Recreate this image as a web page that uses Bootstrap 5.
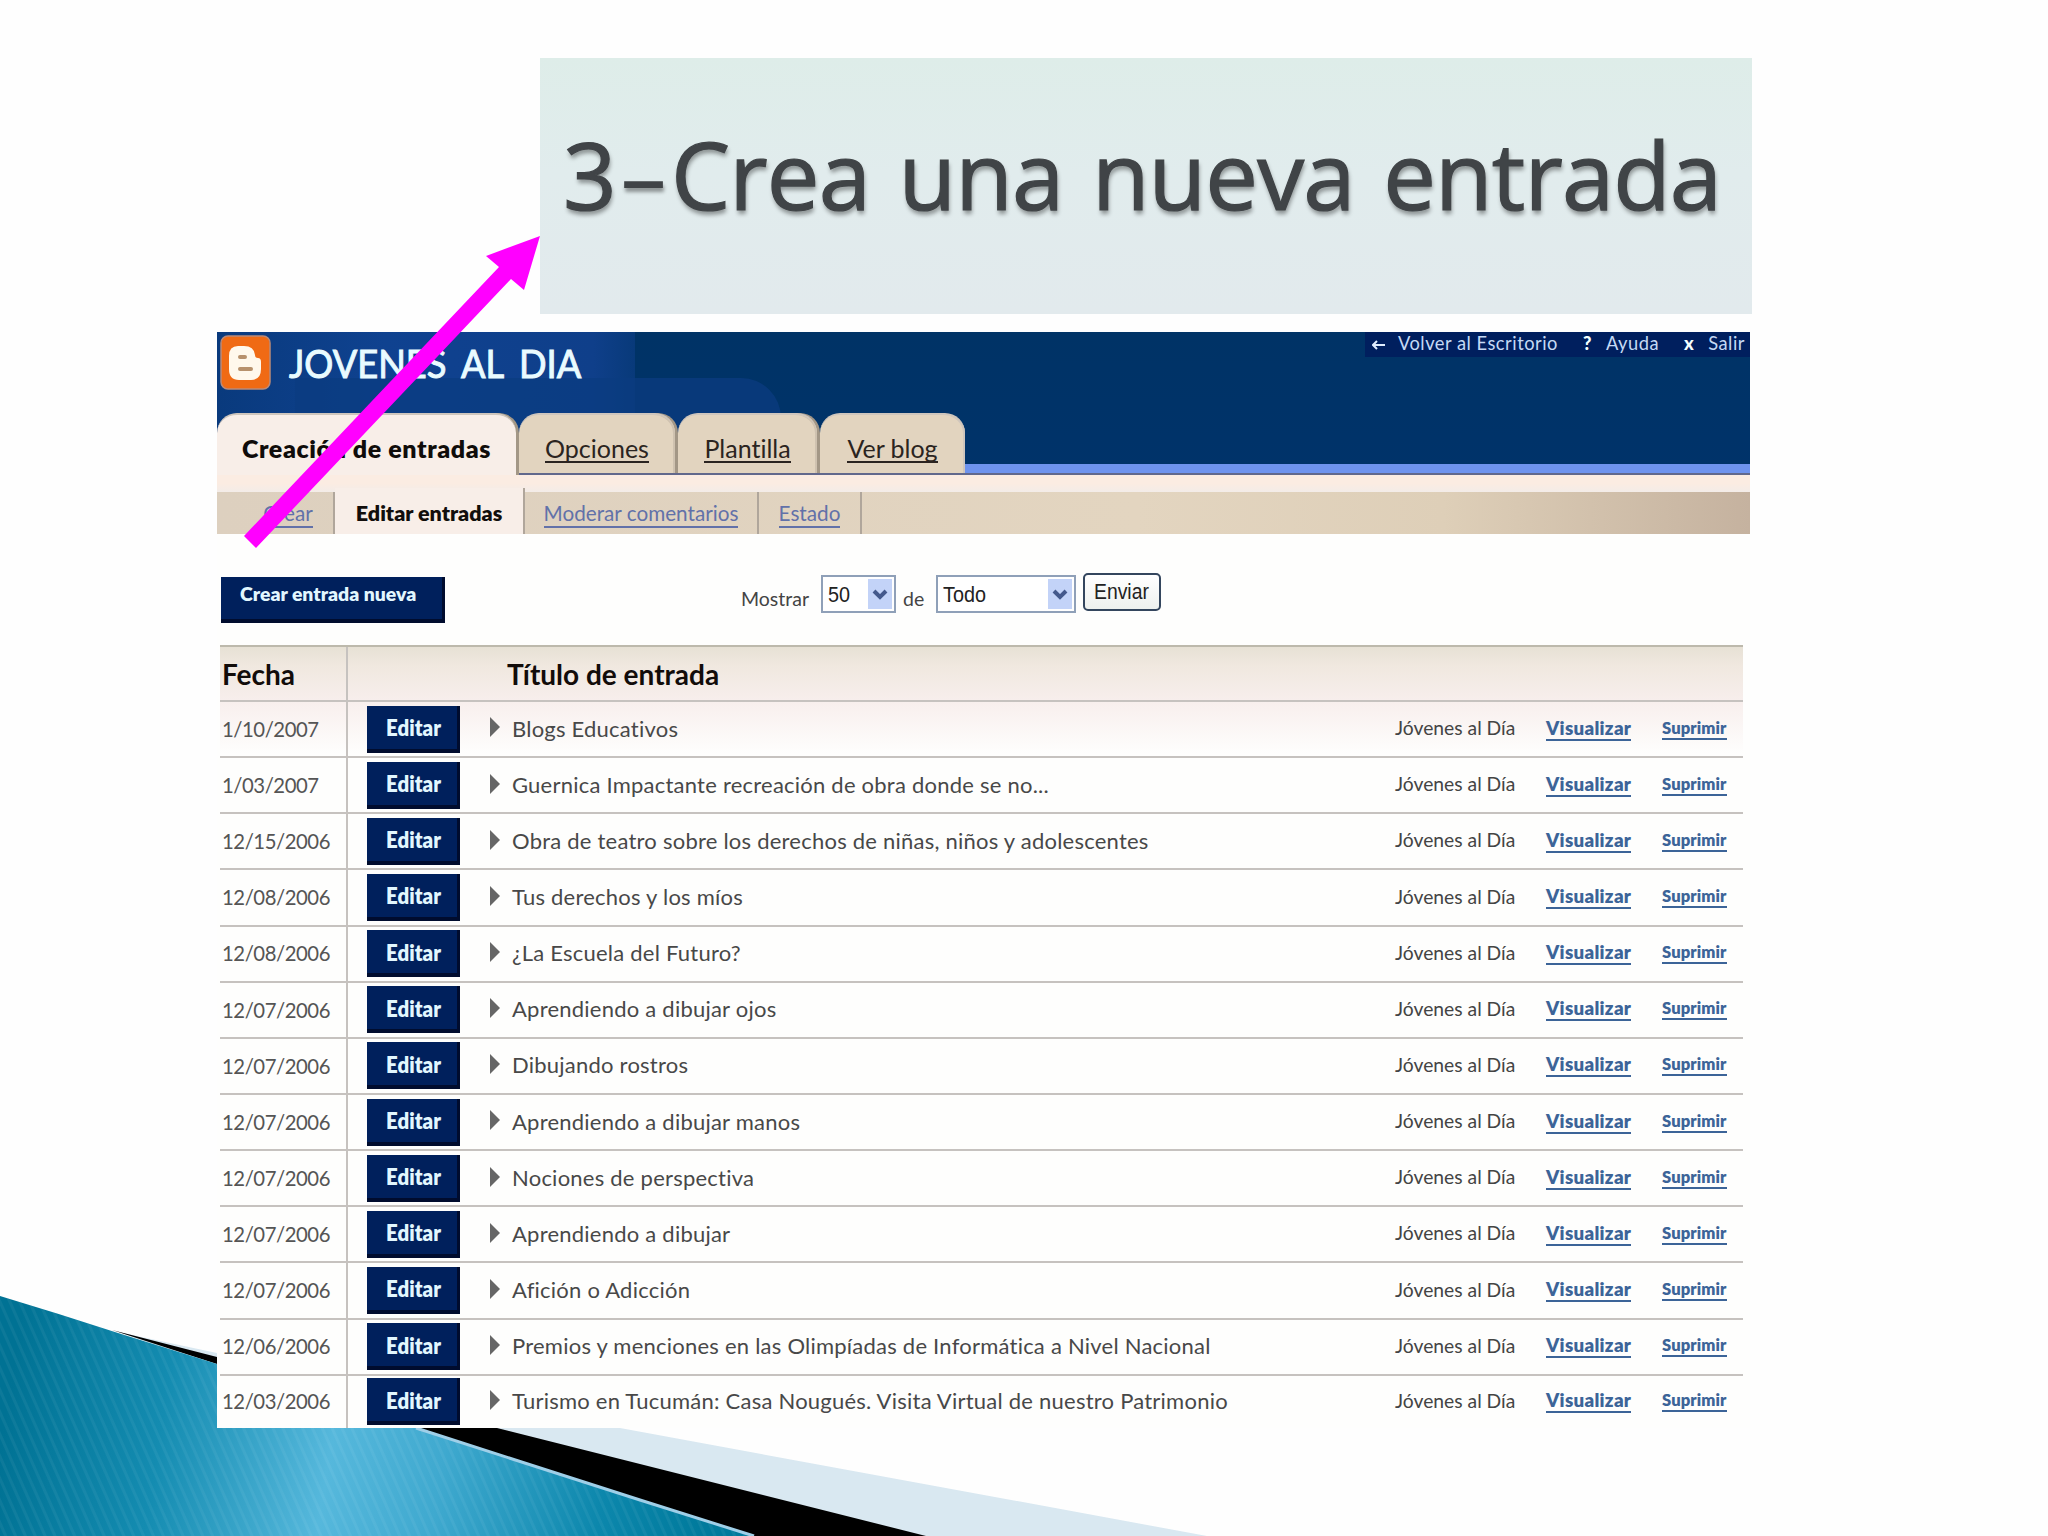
<!DOCTYPE html>
<html lang="es">
<head>
    <meta charset="UTF-8">
    <meta name="viewport" content="width=device-width, initial-scale=1.0">
    <title>Crea una nueva entrada</title>
    <link href="https://cdn.jsdelivr.net/npm/bootstrap@5.3.0/dist/css/bootstrap.min.css" rel="stylesheet">
    <style>
        body {
            background-color: #fefefe;
            font-family: Lato, "Open Sans", sans-serif;
            font-variant-ligatures: none;
            color: #444;
        }
        .slide {
            width: 2048px;
            height: 1536px;
            padding-top: 58px;
        }
        .waves, .pointer {
            left: 0;
            top: 0;
            pointer-events: none;
        }
        .slide-title {
            width: 1212px;
            height: 256px;
            margin: 0 0 18px 540px;
            padding: 0 0 25px 23px;
            background: linear-gradient(#deede9, #e1eced 45%, #e2eaed);
            color: #404447;
            font: 500 94px/1 "Open Sans", sans-serif;
            letter-spacing: -.9px;
            word-spacing: 5px;
            text-shadow: 1px 4px 4px rgba(0, 0, 0, .38);
            -webkit-text-stroke: 1.2px #404447;
            white-space: nowrap;
        }
        .slide-title .dash { display: inline-block; margin: 0 5px 0 4px; transform: scaleX(.98); -webkit-text-stroke: 0; }
        .blog {
            width: 1533px;
            height: 1096px;
            margin-left: 217px;
            background: #fefefd;
        }
        .blog-head {
            height: 143px;
            background: linear-gradient(#036, #00336a);
            border-bottom: 2px solid #61688c;
            box-shadow: inset 0 -9px #6e93ee;
        }
        .glow-a { left: 0; top: 0; width: 418px; height: 134px; background: linear-gradient(90deg, #093a7d, #0f4290 40%, #0f3f8a 90%, #083a7a); }
        .glow-b { left: 78px; top: 46px; width: 486px; height: 88px; background: #0b3c80; border-radius: 0 40px 0 0; opacity: .75; }
        .logo { left: 3px; top: 3px; }
        .blog-name {
            left: 72px;
            top: 7px;
            font-size: 39px;
            line-height: 48px;
            word-spacing: 7px;
            color: #e9fbff;
            -webkit-text-stroke: 1px #e9fbff;
            transform: scaleX(.93);
            transform-origin: left;
            white-space: nowrap;
        }
        .top-links {
            right: 0;
            top: 0;
            width: 385px;
            height: 25px;
            background: #001f5e;
            color: #c5daf5;
            font-size: 18.3px;
            line-height: 22px;
            letter-spacing: .5px;
            white-space: nowrap;
        }
        .top-links b { margin-left: 25px; color: #f4ffff; font-weight: 900; }
        .top-links b + span { margin-left: 14px; }
        .top-links svg { margin: 7px 12px 0 7px; }
        .tabs { left: 0; bottom: -2px; height: 62px; gap: 3px; }
        .tabs a {
            display: block;
            height: 60px;
            border-radius: 20px 20px 0 0;
            background: #e2d4bf;
            border-top: 2px solid #cfc6bd;
            box-shadow: inset -2px 0 #cfc2b0, 3px 0 #a39786;
            color: #2b2420;
            font-size: 25px;
            line-height: 66px;
            text-align: center;
            text-decoration: none;
            white-space: nowrap;
        }
        .tabs a:last-child { box-shadow: inset -2px 0 #cfc6bd; }
        .tabs a span, .subnav a span, .row-link span { border-bottom: 2px solid currentColor; display: inline-block; }
        .tabs a span { line-height: 25px; }
        .tabs .on {
            height: 62px;
            background: #f8eee8;
            box-shadow: 3px 0 #a39786;
            color: #100c0a;
            font-weight: 800;
            letter-spacing: .6px;
        }
        .tab-posts { width: 299px; }
        .tab-options { width: 156px; }
        .tab-template { width: 139px; }
        .tab-view { width: 145px; }
        .strip { height: 17px; background: linear-gradient(#fbece2 50%, #f3ece8); }
        .subnav {
            height: 42px;
            background: linear-gradient(90deg, #ddd0bf, #e3d5c0 60%, #decfb8 80%, #c5b29f);
            font-size: 20.7px;
        }
        .subnav a {
            height: 42px;
            color: #6271a9;
            line-height: 43px;
            border-right: 2px solid #b0a69b;
            text-align: center;
            text-decoration: none;
            white-space: nowrap;
        }
        .subnav a span { line-height: 25px; }
        .subnav .on { background: #f8eee8; color: #120e0c; font-size: 21.5px; font-weight: 800; margin-top: -4px; padding-top: 4px; height: 46px; }
        .sub-new { width: 118px; padding-left: 26px; }
        .sub-edit { width: 190px; }
        .sub-comments { width: 234px; }
        .sub-status { width: 103px; }
        .tools { height: 111px; padding: 39px 0 0 4px; }
        .navy {
            border-radius: 0;
            border: 0;
            background: #00205c;
            box-shadow: inset -3px -4px #000c2e;
            color: #e2f7ff;
            font-weight: 800;
        }
        .new-post { width: 224px; height: 46px; margin-top: 4px; padding: 0 0 12px 19px; font-size: 19.4px; text-align: left; white-space: nowrap; }
        .lbl { font-size: 19.5px; line-height: 23px; padding-top: 14px; color: #444; }
        .lbl-show { margin-left: 296px; width: 80px; }
        .lbl-of { width: 40px; padding-left: 7px; }
        .pick {
            height: 38px;
            margin-top: 2px;
            padding-left: 5px;
            border: 2px solid #8fa0b8;
            background: #fff;
            color: #222;
            font: 22.5px/35px "Liberation Sans", sans-serif;
        }
        .pick-count { width: 75px; }
        .pick-kind { width: 140px; }
        .pick span, .send span { display: inline-block; transform: scaleX(.88); transform-origin: left; }
        .pick svg { margin: 2px 2px 0 0; }
        .send {
            width: 78px;
            height: 38px;
            margin-left: 7px;
            border: 2px solid #34465e;
            border-radius: 5px;
            background: linear-gradient(#fff, #eef1ee);
            color: #222;
            font: 22px/31px "Liberation Sans", sans-serif;
            padding: 0 0 2px 9px;
            text-align: left;
        }
        .posts { margin-left: 3px; width: 1523px; border-top: 2px solid #bdb9ac; }
        .post {
            display: grid;
            grid-template-columns: 128px 143px 904px 151px 116px 81px;
            height: 56.15px;
            border-bottom: 2px solid #c6c2bf;
            align-items: center;
            white-space: nowrap;
            font-size: 22px;
        }
        .post > :first-child { border-right: 2px solid #c6c2bf; height: 100%; display: flex; align-items: center; padding-left: 2px; }
        .post:nth-child(2) { background: linear-gradient(#f8efed, #fefefd 95%); }
        .post:last-child { height: 52px; border-bottom: 0; }
        .post-head { height: 55px; background: linear-gradient(#e7e1d5, #f0e8df 35%, #f7eeec); color: #120c0a; font-size: 28px; font-weight: 700; }
        .edit { width: 93px; height: 47px; margin-left: 19px; padding: 0 0 2px; font-size: 22px; line-height: 44px; }
        .edit span { display: inline-block; transform: scaleX(.93); }
        .day { font-size: 20.3px; letter-spacing: -.45px; color: #555; }
        .name { color: #484848; letter-spacing: .23px; padding-bottom: 2px; }
        .name svg { margin: -7px 12px 0 -1px; }
        .author { font-size: 19.3px; color: #444; padding-bottom: 1px; }
        .row-link { color: #3c6498; font-weight: 800; text-decoration: none; line-height: 21px; }
        .row-link.view { font-size: 18.7px; letter-spacing: .3px; }
        .row-link.del { font-size: 16.6px; line-height: 19px; letter-spacing: .1px; }
    </style>
</head>
<body>
    <main class="slide position-relative overflow-hidden">
        <svg class="waves position-absolute" width="2048" height="1536" viewBox="0 0 2048 1536">
            <defs>
                <linearGradient id="sea" gradientUnits="userSpaceOnUse" x1="0" y1="1450" x2="700" y2="1560">
                    <stop offset="0" stop-color="#007294"/>
                    <stop offset=".22" stop-color="#148cb1"/>
                    <stop offset=".46" stop-color="#56b8dc"/>
                    <stop offset=".62" stop-color="#3fa9cf"/>
                    <stop offset=".85" stop-color="#0c87ac"/>
                    <stop offset="1" stop-color="#007a9c"/>
                </linearGradient>
                <pattern id="lines" width="9" height="9" patternUnits="userSpaceOnUse" patternTransform="rotate(-24)">
                    <rect width="3" height="9" fill="#fff" opacity=".05"/>
                </pattern>
            </defs>
            <path d="M118 1332L217 1353L620 1428L1207 1536H700Z" fill="#d9e8f1"/>
            <path d="M112 1330L217 1357L497 1428L926 1536H740L217 1364Z" fill="#000"/>
            <path d="M0 1296Q60 1314 118 1333L217 1364L416 1428L640 1500L754 1536H0Z" fill="url(#sea)"/>
            <path d="M0 1296Q60 1314 118 1333L217 1364L416 1428L640 1500L754 1536H0Z" fill="url(#lines)"/>
            <path d="M416 1428L640 1500L754 1536" fill="none" stroke="#9fcfe8" stroke-width="3"/>
        </svg>

        <h1 class="slide-title position-relative d-flex align-items-center"><div>3<span class="dash">–</span>Crea una nueva entrada</div></h1>

        <section class="blog position-relative">
            <header class="blog-head position-relative">
                <div class="glow-a position-absolute"></div>
                <div class="glow-b position-absolute"></div>
                <svg class="logo position-absolute" width="51" height="55" viewBox="0 0 51 55">
                    <rect x="1" y="1" width="49" height="53" rx="7" fill="#f06a14" stroke="#bb8a78" stroke-width="1.5"/>
                    <path d="M18 11H24Q34 11 35 20Q35 23 38 23Q41 23 41 27V34Q41 45 31 45H19Q9 45 9 34V21Q9 11 18 11Z" fill="#fff8ec"/>
                    <path d="M20 22H25M20 34H31" stroke="#b7916c" stroke-width="4" stroke-linecap="round"/>
                </svg>
                <div class="blog-name position-absolute">JOVENES AL DIA</div>
                <nav class="top-links position-absolute d-flex">
                    <svg width="14" height="12" viewBox="0 0 14 12"><path d="M1 6H13M5 2L1 6L5 10" fill="none" stroke="#e0edff" stroke-width="2"/></svg>
                    <span>Volver al Escritorio</span>
                    <b>?</b><span>Ayuda</span>
                    <b>x</b><span>Salir</span>
                </nav>
                <nav class="tabs position-absolute d-flex">
                    <a class="tab-posts on" href="#">Creación de entradas</a>
                    <a class="tab-options" href="#"><span>Opciones</span></a>
                    <a class="tab-template" href="#"><span>Plantilla</span></a>
                    <a class="tab-view" href="#"><span>Ver blog</span></a>
                </nav>
            </header>
            <div class="strip"></div>
            <nav class="subnav d-flex">
                <a class="sub-new" href="#"><span>Crear</span></a>
                <a class="sub-edit on" href="#">Editar entradas</a>
                <a class="sub-comments" href="#"><span>Moderar comentarios</span></a>
                <a class="sub-status" href="#"><span>Estado</span></a>
            </nav>

            <div class="tools d-flex align-items-start">
                <button class="btn navy new-post">Crear entrada nueva</button>
                <span class="lbl lbl-show">Mostrar</span>
                <div class="pick pick-count d-flex justify-content-between"><span>50</span>
                    <svg width="24" height="30" viewBox="0 0 24 30"><rect width="24" height="30" fill="#c3d3f8"/><path d="M6 12L12 18L18 12" fill="none" stroke="#44598c" stroke-width="4"/></svg>
                </div>
                <span class="lbl lbl-of">de</span>
                <div class="pick pick-kind d-flex justify-content-between"><span>Todo</span>
                    <svg width="24" height="30" viewBox="0 0 24 30"><rect width="24" height="30" fill="#c3d3f8"/><path d="M6 12L12 18L18 12" fill="none" stroke="#44598c" stroke-width="4"/></svg>
                </div>
                <button class="send"><span>Enviar</span></button>
            </div>

            <div class="posts" id="posts">
                <div class="post post-head">
                    <div>Fecha</div><div></div><div class="ps-3">Título de entrada</div>
                </div>
            </div>
        </section>

        <svg class="pointer position-absolute" width="2048" height="1536" viewBox="0 0 2048 1536">
            <polygon points="540,236 486,256 499,267 244,536 256,548 511,279 524,290" fill="#f0f"/>
        </svg>
    </main>

    <script src="https://cdn.jsdelivr.net/npm/bootstrap@5.3.0/dist/js/bootstrap.bundle.min.js"></script>
    <script>
        const posts = [
            ['1/10/2007', 'Blogs Educativos'],
            ['1/03/2007', 'Guernica Impactante recreación de obra donde se no...'],
            ['12/15/2006', 'Obra de teatro sobre los derechos de niñas, niños y adolescentes'],
            ['12/08/2006', 'Tus derechos y los míos'],
            ['12/08/2006', '¿La Escuela del Futuro?'],
            ['12/07/2006', 'Aprendiendo a dibujar ojos'],
            ['12/07/2006', 'Dibujando rostros'],
            ['12/07/2006', 'Aprendiendo a dibujar manos'],
            ['12/07/2006', 'Nociones de perspectiva'],
            ['12/07/2006', 'Aprendiendo a dibujar'],
            ['12/07/2006', 'Afición o Adicción'],
            ['12/06/2006', 'Premios y menciones en las Olimpíadas de Informática a Nivel Nacional'],
            ['12/03/2006', 'Turismo en Tucumán: Casa Nougués. Visita Virtual de nuestro Patrimonio']
        ];

        document.getElementById('posts').insertAdjacentHTML('beforeend', posts.map(([day, name]) => `
            <div class="post">
                <div class="day">${day}</div>
                <div><button class="btn navy edit"><span>Editar</span></button></div>
                <div class="name"><svg width="10" height="20" viewBox="0 0 10 20"><path d="M0 0L10 10L0 20Z" fill="#666"/></svg>${name}</div>
                <div class="author">Jóvenes al Día</div>
                <a class="row-link view" href="#"><span>Visualizar</span></a>
                <a class="row-link del" href="#"><span>Suprimir</span></a>
            </div>
        `).join(''));
    </script>
</body>
</html>
